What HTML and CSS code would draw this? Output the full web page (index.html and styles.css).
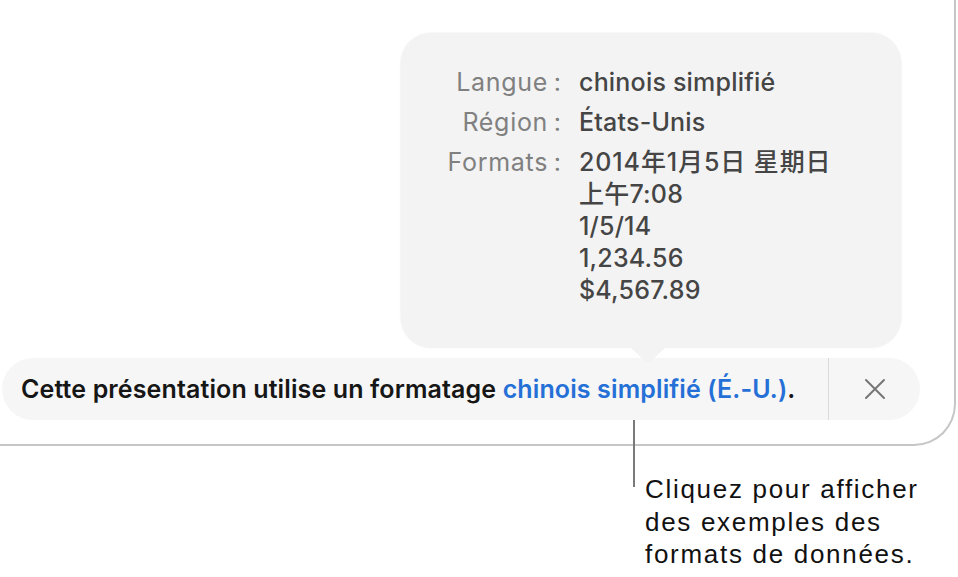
FILE: index.html
```html
<!DOCTYPE html>
<html lang="fr">
<head>
<meta charset="utf-8">
<link rel="stylesheet" href="styles.css">
</head>
<body>
<div class="stage">
  <div class="window">
    <div class="popover">
      <div class="info">
        <div class="label">Langue&nbsp;:</div>
        <div class="value">chinois simplifié</div>
        <div class="label">Région&nbsp;:</div>
        <div class="value">États-Unis</div>
        <div class="label">Formats&nbsp;:</div>
        <div class="value"><span class="cjk">2014年1月5日 星期日</span><br>上午7:08<br>1/5/14<br>1,234.56<br>$4,567.89</div>
      </div>
    </div>
    <div class="bar">
      <div class="message">Cette présentation utilise un formatage&nbsp;<span class="link">chinois simplifié (É.-U.)</span>.</div>
      <div class="divider"></div>
      <div class="close">
        <svg width="22" height="22" viewBox="0 0 22 22"><path d="M2 2 L20 20 M20 2 L2 20" stroke="#767676" stroke-width="2" stroke-linecap="round" fill="none"/></svg>
      </div>
    </div>
  </div>
  <div class="callout-line"></div>
  <div class="callout">Cliquez pour afficher<br>des exemples des<br>formats de données.</div>
</div>
</body>
</html>
```
FILE: styles.css
```css
html, body {
  margin: 0;
  padding: 0;
  background: #ffffff;
  width: 958px;
  height: 577px;
  overflow: hidden;
}
.stage {
  position: relative;
  width: 958px;
  height: 577px;
}
.window {
  box-sizing: border-box;
  width: 956px;
  height: 446px;
  border-right: 2px solid #c6c6c6;
  border-bottom: 2px solid #c6c6c6;
  border-bottom-right-radius: 42px;
  padding-top: 33px;
  display: flex;
  flex-direction: column;
}
.popover {
  position: relative;
  box-sizing: border-box;
  margin-left: 401px;
  width: 500px;
  height: 314px;
  background: #f3f3f3;
  border-radius: 30px;
  box-shadow: 0 0 0 1px rgba(0,0,0,0.025), 0 1px 3px rgba(0,0,0,0.04);
  padding-top: 33px;
}
.popover::after {
  content: "";
  position: absolute;
  left: 228px;
  bottom: -16px;
  width: 38px;
  height: 17px;
  background: #f3f3f3;
  clip-path: polygon(0 0, 100% 0, 55% 95%, 45% 95%);
}
.info {
  display: grid;
  grid-template-columns: 160px auto;
  column-gap: 18px;
  row-gap: 8px;
  font-family: Inter, "Noto Sans CJK SC", sans-serif;
  font-size: 25px;
  line-height: 32px;
}
.label {
  text-align: right;
  color: #808080;
  font-weight: 400;
  letter-spacing: 0.7px;
  word-spacing: -2px;
  margin-right: -0.7px;
}
.value {
  color: #454545;
  font-weight: 500;
  letter-spacing: 0.2px;
  white-space: nowrap;
}
.cjk {
  letter-spacing: 0.9px;
}
.bar {
  margin-top: 11px;
  margin-left: 2px;
  width: 918px;
  height: 62px;
  border-radius: 31px;
  background: #f6f6f6;
  display: flex;
  align-items: stretch;
}
.message {
  flex: 1;
  display: flex;
  align-items: center;
  padding-left: 19px;
  font-family: Inter, sans-serif;
  font-weight: 600;
  font-size: 25px;
  letter-spacing: 0.12px;
  color: #161616;
  white-space: nowrap;
}
.link {
  color: #2570d6;
}
.divider {
  width: 1px;
  background: #dadada;
}
.close {
  width: 91px;
  display: flex;
  align-items: center;
  justify-content: center;
}
.callout-line {
  position: absolute;
  left: 633px;
  top: 420px;
  width: 2px;
  height: 67px;
  background: #7a7a7a;
}
.callout {
  position: absolute;
  left: 645px;
  top: 473px;
  font-family: "Liberation Sans", Arial, sans-serif;
  font-size: 26px;
  letter-spacing: 1.7px;
  line-height: 32.5px;
  color: #111111;
}
```
